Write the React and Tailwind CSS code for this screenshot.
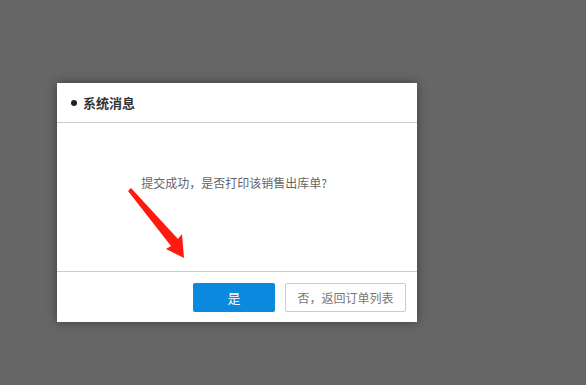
export default function App() {
  return (
    <div
      className="w-[586px] h-[385px] bg-[#666666] pt-[83px] pl-[57px] overflow-hidden"
      style={{ fontFamily: '"Noto Sans CJK SC", "Noto Sans", sans-serif' }}
    >
      <div className="relative w-[360px] h-[239px] bg-white flex flex-col shadow-[0_0_10px_rgba(0,0,0,0.4)]">
        {/* header */}
        <div className="h-[40px] border-b border-[#cccccc] flex items-center pl-[14px]">
          <span className="w-[6px] h-[6px] rounded-full bg-[#222222] mr-[6px]" />
          <span className="text-[13px] font-bold text-[#333333] leading-none">系统消息</span>
        </div>

        {/* body */}
        <div className="flex-1 flex justify-center pt-[52px] pr-[6px]">
          <p className="text-[12px] text-[#666666] leading-[16px]">提交成功，是否打印该销售出库单?</p>
        </div>

        {/* footer */}
        <div className="h-[51px] border-t border-[#cccccc] flex items-start justify-end gap-[10px] pt-[11px] pr-[11px]">
          <button
            type="button"
            className="w-[82px] h-[29px] rounded-[2px] bg-[#0a89de] text-white text-[13px] flex items-center justify-center"
          >
            是
          </button>
          <button
            type="button"
            className="w-[121px] h-[29px] rounded-[2px] border border-[#cccccc] bg-white text-[#777777] text-[12px] flex items-center justify-center"
          >
            否，返回订单列表
          </button>
        </div>

        {/* red annotation arrow */}
        <svg
          className="absolute left-0 top-0 pointer-events-none"
          width="360"
          height="239"
          viewBox="0 0 360 239"
        >
          <polygon
            points="71,108 74,105 121,156 125,151 127,175 109,166 114,163"
            fill="#ff1a0e"
          />
        </svg>
      </div>
    </div>
  );
}
